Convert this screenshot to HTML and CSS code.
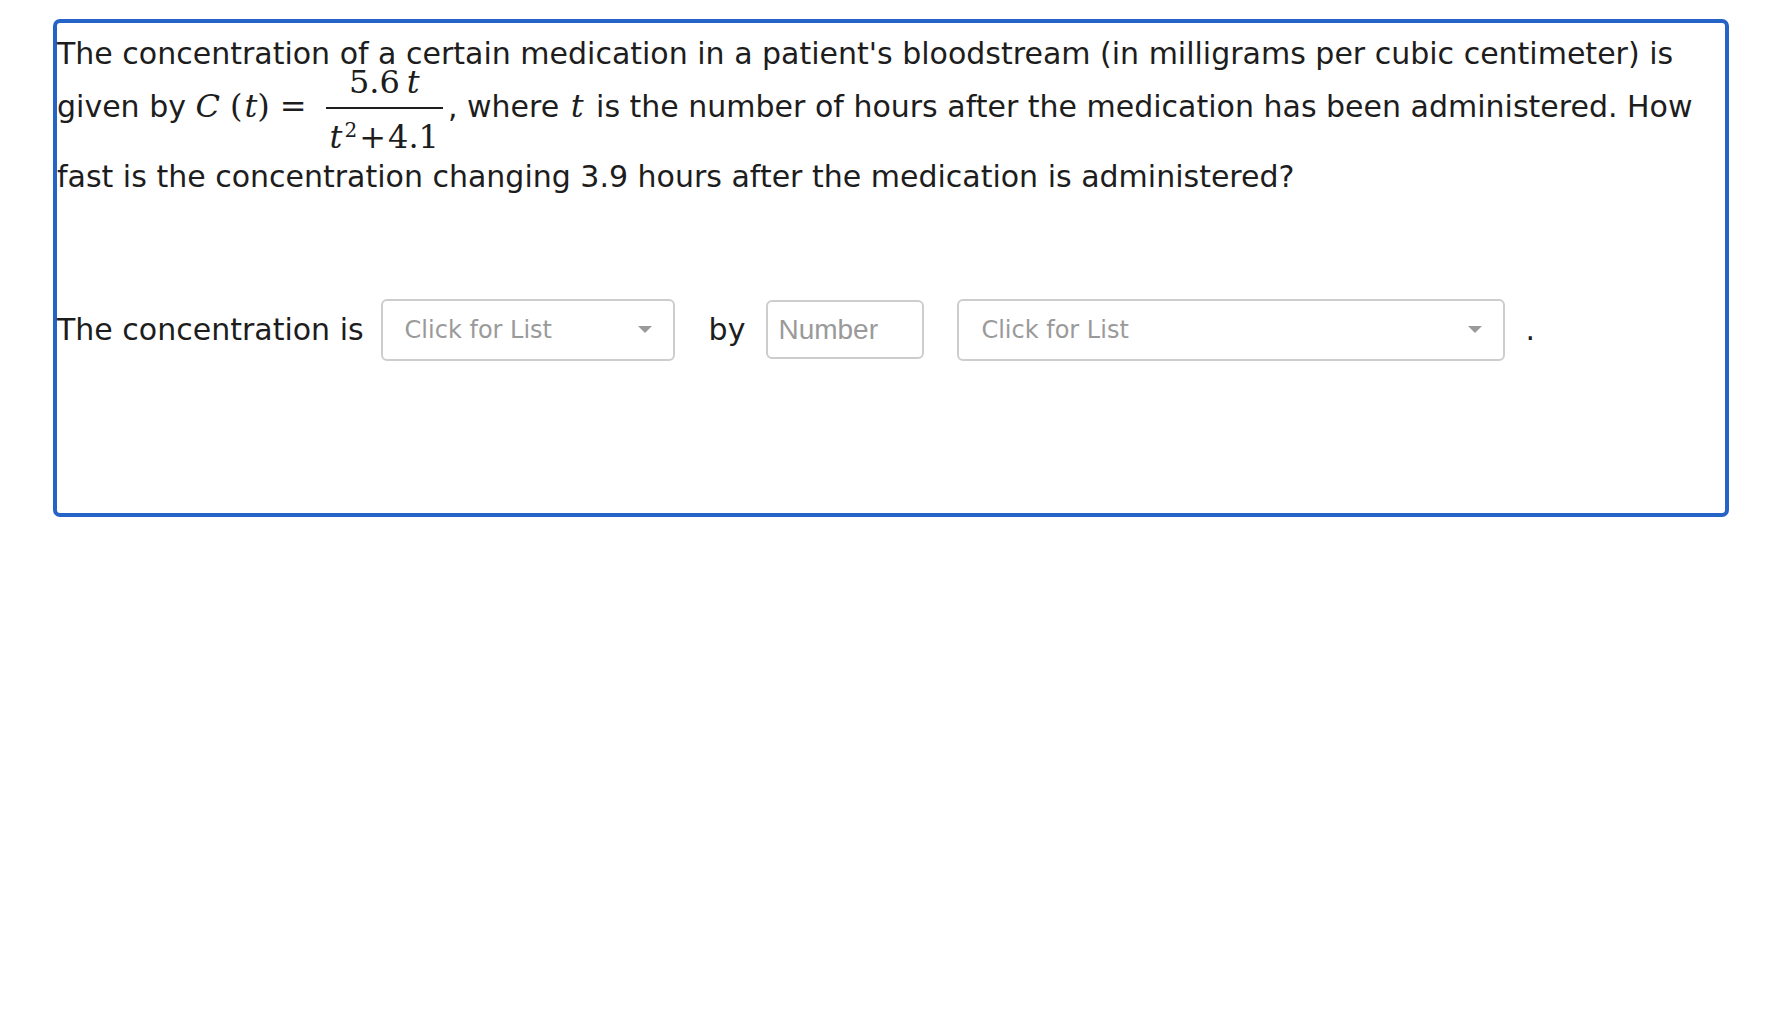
FILE: index.html
```html
<!DOCTYPE html>
<html lang="en">
<head>
<meta charset="utf-8">
<title>Medication concentration</title>
<link rel="stylesheet" href="styles.css">
</head>
<body>
<div class="question">
  <p class="stem">The concentration of a certain medication in a patient's bloodstream (in milligrams per cubic centimeter) is<br>given by <span class="math"><span class="mi mi-c">C</span><span class="mo lp">(</span><span class="mi mi-t">t</span><span class="mo rp">)</span><span class="mo eq">=</span><span class="frac"><span class="num">5.6<span class="thin"></span><span class="mi">t</span></span><span class="bar"></span><span class="den"><span class="mi">t</span><span class="sup">2</span><span class="mo plus">+</span>4.1</span></span></span>, where <span class="math inline-var"><span class="mi">t</span></span> is the number of hours after the medication has been administered. How<br>fast is the concentration changing 3.9 hours after the medication is administered?</p>
  <div class="answer">
    <span class="label">The concentration is</span>
    <div class="dd dd-short"><span class="dd-text">Click for List</span><span class="caret"></span></div>
    <span class="label by">by</span>
    <input class="number" type="text" placeholder="Number">
    <div class="dd dd-long"><span class="dd-text">Click for List</span><span class="caret"></span></div>
    <span class="label period">.</span>
  </div>
</div>
</body>
</html>
```
FILE: styles.css
```css
html, body {
  margin: 0;
  padding: 0;
  background: #ffffff;
}

body {
  font-family: "DejaVu Sans", Verdana, sans-serif;
  color: #1d1d1d;
}

.question {
  margin: 19px 43px 0 53px;
  border: 4px solid #2663c6;
  border-radius: 7px;
  min-height: 498px;
  box-sizing: border-box;
  padding-top: 8px;
}

.stem {
  margin: 0;
  font-size: 30px;
  line-height: 45px;
  white-space: nowrap;
}

.math {
  font-family: "DejaVu Serif", "Liberation Serif", serif;
  font-size: 32px;
  white-space: nowrap;
}

.inline-var {
  margin: 0 3px 0 2px;
}

.mi {
  font-style: italic;
}

.mi-c {
  margin-right: 10px;
}

.mi-t {
  margin-left: 2px;
}

.eq {
  margin: 0 17px 0 10px;
}

.frac {
  display: inline-flex;
  flex-direction: column;
  align-items: center;
  vertical-align: 24px;
  margin: -10.2px 5px 1.2px 2px;
}

.num {
  line-height: 32px;
  padding: 0 4px 8.8px;
}

.thin {
  display: inline-block;
  width: 7px;
}

.bar {
  align-self: stretch;
  height: 2px;
  background: #1d1d1d;
}

.den {
  line-height: 32px;
  padding: 12.2px 4px 0;
}

.sup {
  font-size: 20px;
  font-style: normal;
  line-height: 0;
  vertical-align: 11px;
  margin-left: 2px;
}

.plus {
  margin: 0 2px;
}

.answer {
  display: flex;
  align-items: center;
  margin-top: 100px;
  font-size: 30px;
}

.label {
  white-space: nowrap;
}

.dd {
  display: flex;
  align-items: center;
  justify-content: space-between;
  height: 62px;
  box-sizing: border-box;
  border: 2px solid #cdcdcd;
  border-radius: 6px;
  padding: 0 21px 0 22px;
  font-size: 24px;
  color: #9a9a9a;
  background: #fff;
}

.dd-short {
  width: 294px;
  margin-left: 17px;
}

.dd-long {
  width: 548px;
  margin-left: 33px;
}

.caret {
  width: 0;
  height: 0;
  border-left: 7px solid transparent;
  border-right: 7px solid transparent;
  border-top: 7px solid #9a9a9a;
}

.by {
  margin-left: 34px;
}

.number {
  width: 158px;
  height: 59px;
  box-sizing: border-box;
  margin: 0 0 0 21px;
  border: 2px solid #cdcdcd;
  border-radius: 6px;
  padding: 0 10px;
  font-family: "Liberation Sans", Arial, sans-serif;
  font-size: 28px;
  color: #333;
  background: #fff;
  outline: none;
}

.number::placeholder {
  color: #9a9a9a;
  opacity: 1;
}

.period {
  margin-left: 20px;
}
```
